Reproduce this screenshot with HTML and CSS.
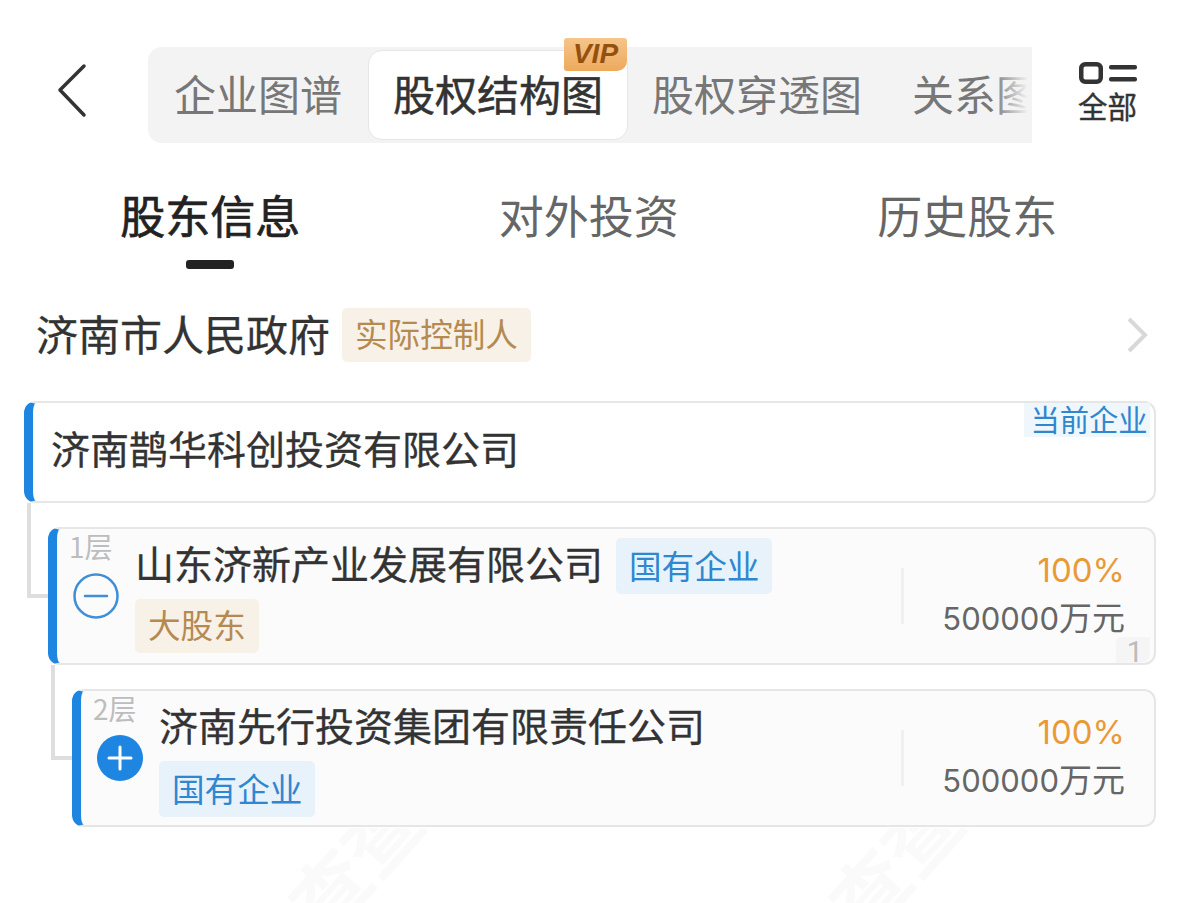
FILE: index.html
```html
<!DOCTYPE html>
<html lang="zh-CN">

<head>
  <meta charset="utf-8">
  <meta name="viewport" content="width=device-width, initial-scale=1.0">
  <title>股权结构图</title>
  <link rel="stylesheet" href="styles.css">
</head>

<body>
  <header class="topbar">
    <svg class="back" width="32" height="56" viewBox="0 0 32 56">
      <path d="M28 3 L4 27 L28 52" fill="none" stroke="#333" stroke-width="3.5" stroke-linecap="round" stroke-linejoin="round" />
    </svg>
    <div class="tabs">
      <span class="tab">企业图谱</span>
      <span class="tab tab-active">股权结构图<em class="vip">VIP</em></span>
      <span class="tab">股权穿透图</span>
      <div class="tab-clip">
        <span class="tab">关系图</span>
        <i class="tabs-fade"></i>
      </div>
    </div>
    <div class="all">
      <svg width="58" height="22" viewBox="0 0 58 22">
        <rect x="2.25" y="2.25" width="19.5" height="17.5" rx="4" fill="none" stroke="#333" stroke-width="4.5" />
        <rect x="30" y="3" width="28" height="4.5" rx="2" fill="#333" />
        <rect x="30" y="15" width="28" height="4.5" rx="2" fill="#333" />
      </svg>
      <span>全部</span>
    </div>
  </header>

  <nav class="subtabs">
    <div class="subtab subtab-active">股东信息<i class="underline"></i></div>
    <div class="subtab">对外投资</div>
    <div class="subtab">历史股东</div>
  </nav>

  <section class="controller">
    <span class="controller-name">济南市人民政府</span>
    <span class="tag tag-brown">实际控制人</span>
    <svg class="chevron" width="22" height="36" viewBox="0 0 22 36">
      <path d="M3 2 L19 18 L3 34" fill="none" stroke="#d8d8d8" stroke-width="4" />
    </svg>
  </section>

  <section class="tree">
    <article class="card card-root">
      <h3 class="title">济南鹊华科创投资有限公司</h3>
      <span class="current">当前企业</span>
    </article>

    <article class="card card-sub level-1">
      <i class="link"></i>
      <div class="side">
        <span class="level">1层</span>
        <svg width="46" height="46" viewBox="0 0 46 46">
          <circle cx="23" cy="23" r="21.5" fill="none" stroke="#3f8fd6" stroke-width="2.5" />
          <path d="M12 23 H34" stroke="#3f8fd6" stroke-width="2.5" stroke-linecap="round" />
        </svg>
      </div>
      <div class="info">
        <h3 class="title">山东济新产业发展有限公司</h3>
        <span class="tag tag-blue">国有企业</span>
        <span class="tag tag-brown">大股东</span>
      </div>
      <div class="stake">
        <span class="percent">100%</span>
        <span class="amount">500000<span class="unit">万元</span></span>
      </div>
      <span class="count">1</span>
    </article>

    <article class="card card-sub level-2">
      <i class="link"></i>
      <div class="side">
        <span class="level">2层</span>
        <svg width="46" height="46" viewBox="0 0 46 46">
          <circle cx="23" cy="23" r="23" fill="#1e85e0" />
          <path d="M12 23 H34 M23 12 V34" stroke="#fff" stroke-width="3" stroke-linecap="round" />
        </svg>
      </div>
      <div class="info">
        <h3 class="title">济南先行投资集团有限责任公司</h3>
        <span class="tag tag-blue">国有企业</span>
      </div>
      <div class="stake">
        <span class="percent">100%</span>
        <span class="amount">500000<span class="unit">万元</span></span>
      </div>
    </article>
  </section>

  <div class="watermarks">
    <span class="watermark mark-left">C查查</span>
    <span class="watermark mark-right">C查查</span>
  </div>
</body>

</html>
```

FILE: styles.css
```css
* {
  box-sizing: border-box;
}

html,
body {
  height: 100%;
}

body {
  position: relative;
  margin: 0;
  overflow: hidden;
  background-color: #fff;
  color: #333;
  font-family: "Noto Sans CJK SC", "Noto Sans", sans-serif;
}

.topbar {
  display: flex;
  align-items: flex-start;
  height: 143px;
  padding-top: 47px;
}

.back {
  flex: none;
  margin: 16px 0 0 56px;
}

.tabs {
  display: flex;
  align-items: center;
  flex: none;
  width: 884px;
  height: 96px;
  margin-left: 60px;
  padding-left: 26px;
  background-color: #f3f3f4;
  border-radius: 14px 0 0 14px;
}

.tab {
  flex: none;
  padding-bottom: 5px;
  color: #777;
  font-size: 42px;
  line-height: 60px;
  white-space: nowrap;
}

.tab-active {
  position: relative;
  display: flex;
  align-items: center;
  justify-content: center;
  width: 260px;
  height: 90px;
  margin: 0 24px 0 26px;
  background-color: #fff;
  border: 1px solid #e6e6e6;
  border-radius: 14px;
  color: #333;
  -webkit-text-stroke: 0.5px #333;
}

.vip {
  position: absolute;
  top: -13px;
  right: 0;
  width: 63px;
  height: 33px;
  background: linear-gradient(#f6c58a, #eda95c);
  border-radius: 3px 3px 10px 3px;
  color: #94500f;
  font-family: "Liberation Sans", sans-serif;
  font-size: 28px;
  font-weight: 700;
  line-height: 32px;
  text-align: center;
  -webkit-text-stroke: 0;
}

.tab-clip {
  position: relative;
  flex: 1;
  height: 100%;
  display: flex;
  align-items: center;
  margin-left: 50px;
  overflow: hidden;
}

.tabs-fade {
  position: absolute;
  top: 0;
  right: 0;
  width: 40px;
  height: 100%;
  background: linear-gradient(to right, rgba(243, 243, 244, 0), #f3f3f4 90%);
}

.all {
  display: flex;
  flex-direction: column;
  align-items: center;
  margin: 15px 0 0 46px;
  color: #333;
  font-size: 29.5px;
  line-height: 36px;
  -webkit-text-stroke: 0.4px #333;
}

.all svg {
  display: block;
  margin-bottom: 3px;
}

.subtabs {
  display: flex;
  height: 129px;
  padding-left: 21px;
}

.subtab {
  position: relative;
  width: 378.5px;
  padding-top: 38px;
  color: #666;
  font-size: 45px;
  line-height: 68px;
  text-align: center;
}

.subtab-active {
  color: #222;
  -webkit-text-stroke: 0.7px #222;
}

.underline {
  position: absolute;
  top: 117px;
  left: 50%;
  width: 48px;
  height: 9px;
  margin-left: -24px;
  background-color: #222;
  border-radius: 3px;
}

.controller {
  display: flex;
  align-items: center;
  height: 54px;
  margin-top: 36px;
  padding: 0 31px 0 36px;
}

.controller-name {
  padding-bottom: 5px;
  color: #333;
  font-size: 42px;
  line-height: 54px;
  white-space: nowrap;
  -webkit-text-stroke: 0.3px #333;
}

.tag {
  display: inline-block;
  flex: none;
  height: 54px;
  padding: 0 13px;
  border-radius: 5px;
  font-size: 32.6px;
  line-height: 50px;
  white-space: nowrap;
}

.tag-brown {
  background-color: #f8f1e8;
  color: #b58a50;
}

.tag-blue {
  height: 56px;
  background-color: #e8f2fb;
  color: #2f88cf;
  line-height: 54px;
}

.controller .tag {
  margin-left: 12px;
}

.chevron {
  margin-left: auto;
}

.tree {
  display: flex;
  flex-direction: column;
  gap: 24px;
  margin: 39px 23px 0 24px;
}

.card {
  position: relative;
  display: flex;
  background-color: #fff;
  border: 2px solid #e6e6e6;
  border-left: 9px solid #1e85e0;
  border-radius: 12px;
}

.card-root {
  align-items: center;
  height: 102px;
  padding: 0 0 10px 18px;
}

.title {
  margin: 0;
  color: #333;
  font-size: 39px;
  font-weight: 400;
  line-height: 54px;
  white-space: nowrap;
  -webkit-text-stroke: 0.3px #333;
}

.current {
  position: absolute;
  top: 0;
  right: 4px;
  width: 126px;
  height: 34px;
  padding-left: 4px;
  background-color: #eff6fc;
  color: #2f88cf;
  font-size: 29.3px;
  line-height: 30px;
  text-align: center;
}

.card-sub {
  height: 138px;
  background-color: #fbfbfc;
}

.level-1 {
  margin-left: 24px;
}

.level-2 {
  margin-left: 48px;
}

.link {
  position: absolute;
  top: -26px;
  left: -30px;
  width: 21px;
  height: 95px;
  border-bottom: 4px solid #dedede;
  border-left: 4px solid #dedede;
}

.side {
  display: flex;
  flex: none;
  flex-direction: column;
  align-items: flex-start;
  width: 78px;
  padding-left: 12px;
}

.level {
  color: #bdbdbd;
  font-size: 28px;
  line-height: 34px;
}

.side svg {
  margin: 10px 0 0 4px;
}

.info {
  display: flex;
  flex: 1;
  flex-wrap: wrap;
  align-content: flex-start;
  align-items: flex-start;
  gap: 5px 13px;
  min-width: 0;
  padding-top: 9px;
}

.info .title {
  height: 56px;
  line-height: 48px;
}

.level-2 .title {
  flex-basis: 100%;
}

.stake {
  display: flex;
  flex: none;
  flex-direction: column;
  align-items: flex-end;
  width: 253px;
  height: 56px;
  margin-top: 39px;
  padding-right: 29px;
  border-left: 3px solid #f0f0f1;
}

.percent,
.amount {
  font-family: "Inter", "Noto Sans CJK SC", sans-serif;
  font-size: 31px;
  line-height: 48px;
  white-space: nowrap;
}

.percent {
  margin-top: -22px;
  color: #ea9a35;
  font-size: 33px;
}

.amount {
  margin-top: -2px;
  color: #666;
}

.unit {
  font-family: "Noto Sans CJK SC", sans-serif;
  font-size: 33px;
}

.count {
  position: absolute;
  right: 4px;
  bottom: 0;
  width: 34px;
  height: 26px;
  padding-left: 4px;
  background-color: #f5f5f6;
  border-radius: 6px 0 10px 0;
  color: #bbb;
  font-family: "Roboto", sans-serif;
  font-size: 29px;
  line-height: 30px;
  text-align: center;
}

/* faint watermark under the last card, cut by the bottom of the screen */
.watermarks {
  position: absolute;
  top: 828px;
  left: 0;
  width: 100%;
  height: 75px;
  overflow: hidden;
  pointer-events: none;
}

.watermark {
  position: absolute;
  top: 10px;
  color: #fafafa;
  font-size: 76px;
  font-weight: 700;
  line-height: 80px;
  white-space: nowrap;
  transform: rotate(-48deg);
}

.mark-left {
  left: 235px;
}

.mark-right {
  left: 775px;
}
```
